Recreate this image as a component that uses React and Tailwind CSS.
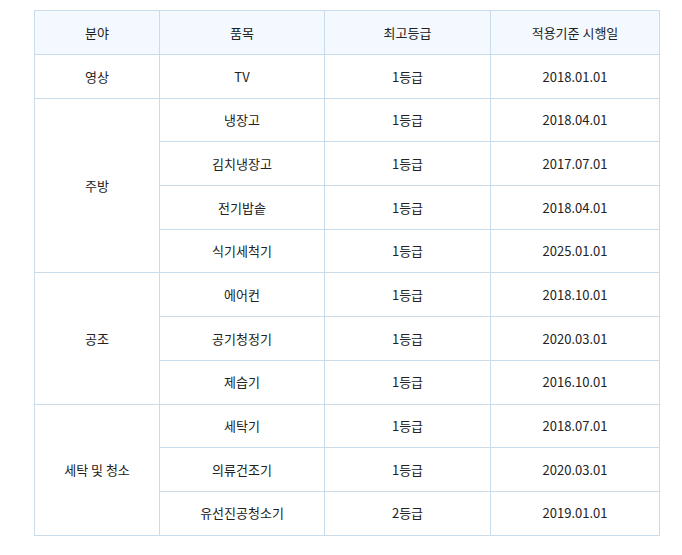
import React from 'react';

const groups = [
  { field: '영상', items: [['TV', '1등급', '2018.01.01']] },
  {
    field: '주방',
    items: [
      ['냉장고', '1등급', '2018.04.01'],
      ['김치냉장고', '1등급', '2017.07.01'],
      ['전기밥솥', '1등급', '2018.04.01'],
      ['식기세척기', '1등급', '2025.01.01'],
    ],
  },
  {
    field: '공조',
    items: [
      ['에어컨', '1등급', '2018.10.01'],
      ['공기청정기', '1등급', '2020.03.01'],
      ['제습기', '1등급', '2016.10.01'],
    ],
  },
  {
    field: '세탁 및 청소',
    items: [
      ['세탁기', '1등급', '2018.07.01'],
      ['의류건조기', '1등급', '2020.03.01'],
      ['유선진공청소기', '2등급', '2019.01.01'],
    ],
  },
];

const cell = 'border border-[#c9dcec] text-center align-middle';

export default function App() {
  return (
    <div className="min-h-screen bg-white pt-[10px] pl-[34px] font-['Noto_Sans_CJK_KR',sans-serif] text-[13px] text-[#222]">
      <table className="w-[625px] border-collapse table-fixed">
        <colgroup>
          <col className="w-[125px]" />
          <col className="w-[165px]" />
          <col className="w-[166px]" />
          <col className="w-[169px]" />
        </colgroup>
        <thead>
          <tr className="h-[44px] bg-[#f3f9fe]">
            <th className={`${cell} font-normal`}>분야</th>
            <th className={`${cell} font-normal`}>품목</th>
            <th className={`${cell} font-normal`}>최고등급</th>
            <th className={`${cell} font-normal`}>적용기준 시행일</th>
          </tr>
        </thead>
        <tbody>
          {groups.map((g) =>
            g.items.map((it, i) => (
              <tr key={g.field + it[0]} className="h-[43.7px]">
                {i === 0 && (
                  <td className={cell} rowSpan={g.items.length}>
                    {g.field}
                  </td>
                )}
                <td className={cell}>{it[0]}</td>
                <td className={cell}>{it[1]}</td>
                <td className={cell}>{it[2]}</td>
              </tr>
            ))
          )}
        </tbody>
      </table>
    </div>
  );
}
